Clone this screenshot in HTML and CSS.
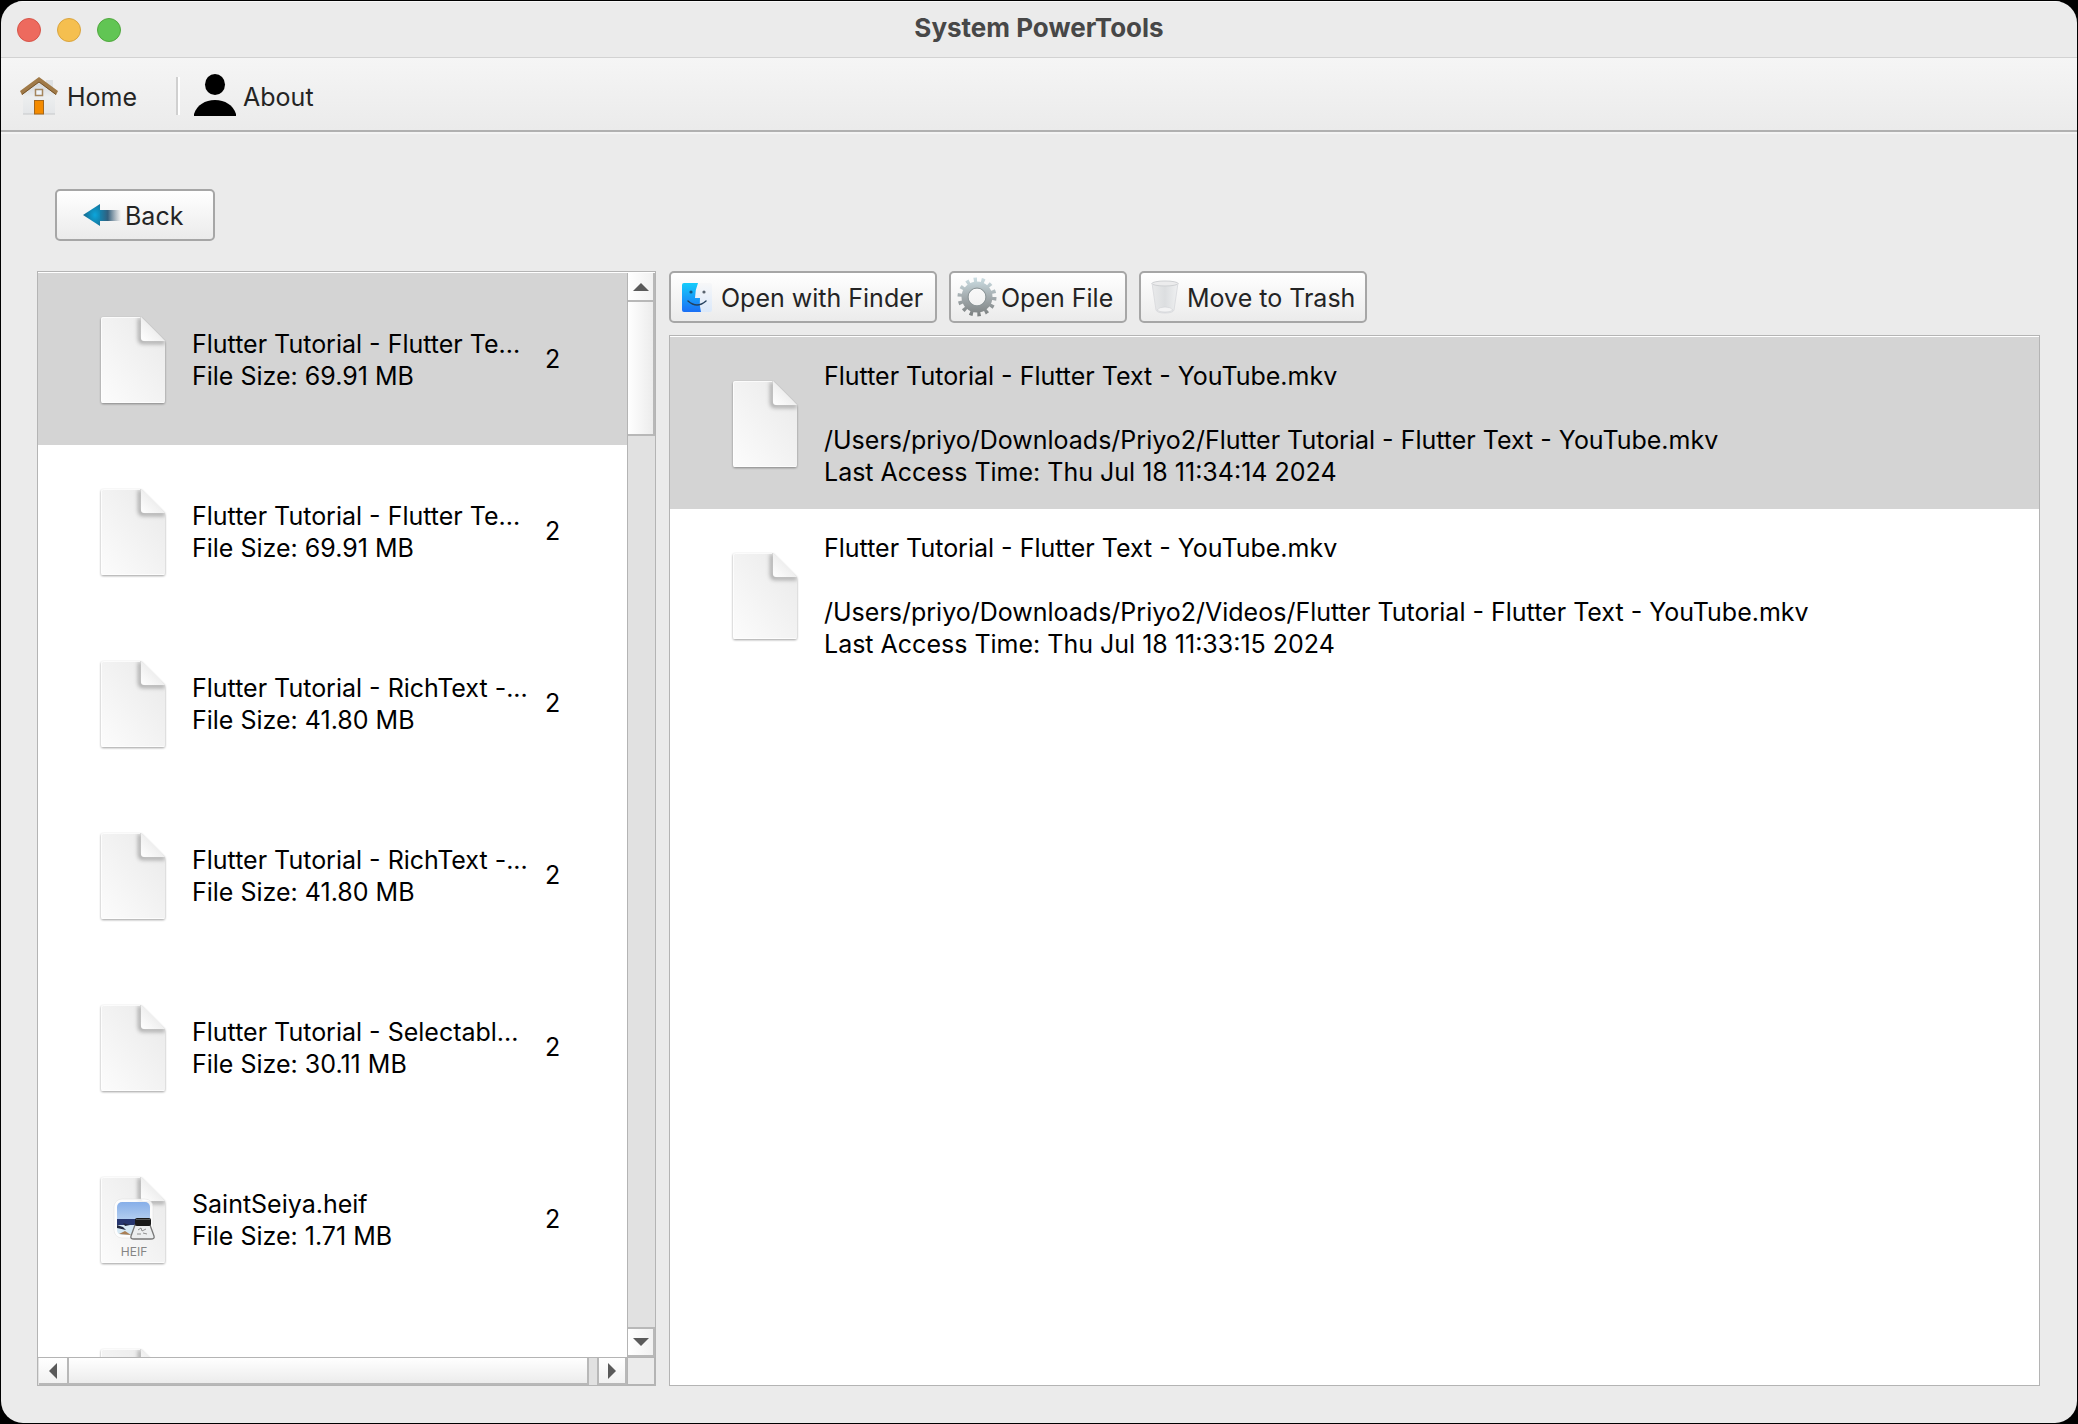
FILE: index.html
```html
<!DOCTYPE html>
<html lang="en">
<head>
<meta charset="utf-8">
<title>System PowerTools</title>
<link rel="stylesheet" href="styles.css">
</head>
<body>
<svg class="defs" aria-hidden="true">
  <defs>
    <linearGradient id="paper" x1="1" y1="0" x2="0" y2="1"><stop offset="0" stop-color="#e9e9e9"/><stop offset="1" stop-color="#fcfcfc"/></linearGradient>
    <linearGradient id="fold" x1="0" y1="1" x2="0.6" y2="0.4"><stop offset="0" stop-color="#ffffff"/><stop offset="1" stop-color="#ececec"/></linearGradient>
    <filter id="soft" x="-50%" y="-50%" width="200%" height="200%"><feGaussianBlur stdDeviation="2"/></filter>
    <filter id="edge" x="-10%" y="-10%" width="120%" height="120%"><feDropShadow dx="0" dy="1" stdDeviation="0.8" flood-color="#000" flood-opacity="0.38"/></filter>
    <clipPath id="sheet"><path d="M2 0H40L64 24V84Q64 86 62 86H2Q0 86 0 84V2Q0 0 2 0Z"/></clipPath>
    <symbol id="file" viewBox="-3 -3 70 94">
      <path d="M2 0H40L64 24V84Q64 86 62 86H2Q0 86 0 84V2Q0 0 2 0Z" fill="url(#paper)" filter="url(#edge)"/>
      <g clip-path="url(#sheet)"><path d="M39 1V22Q39 25 42 25H64" fill="none" stroke="#000" stroke-opacity=".4" stroke-width="3" filter="url(#soft)"/></g>
      <path d="M40 0V21Q40 24 43 24H64Z" fill="url(#fold)"/>
      <path d="M.5 84V2.500Q.5 .5 2.500 .5H39M1 85.500H63" fill="none" stroke="#fff" stroke-opacity=".75"/>
    </symbol>
  </defs>
</svg>
<div class="window">
  <header class="titlebar">
    <div class="lights">
      <button class="light close" aria-label="Close"></button>
      <button class="light minimise" aria-label="Minimise"></button>
      <button class="light zoom" aria-label="Zoom"></button>
    </div>
    <h1 class="title">System PowerTools</h1>
  </header>
  <nav class="toolbar">
    <button class="tool">
      <svg width="40" height="40" viewBox="0 0 40 40" aria-hidden="true">
        <defs><linearGradient id="wall" x1="0" y1="0" x2="0" y2="1"><stop offset="0" stop-color="#cfd3d6"/><stop offset=".5" stop-color="#eceeef"/><stop offset="1" stop-color="#e4e6e8"/></linearGradient></defs>
        <path d="M27 4H34V16L27 10Z" fill="#dfe2e4"/>
        <path d="M4 16L20 4L36 16V38H4Z" fill="url(#wall)"/><path d="M4 38H36" stroke="#c6c8ca"/>
        <path d="M1 15L20 1L39 15L37 19L20 6L3 19Z" fill="#a07a48"/><path d="M3 18.500L20 6L37 18.500" fill="none" stroke="#765327"/>
        <rect x="16.500" y="13.500" width="7" height="6" fill="#eef4fa" stroke="#a4855c" stroke-width="1.500"/>
        <rect x="15.500" y="24.500" width="9" height="13.500" fill="#f48b00" stroke="#a5671b"/>
      </svg>
      <span>Home</span>
    </button>
    <span class="divider"></span>
    <button class="tool about">
      <svg width="42" height="42" viewBox="0 0 42 42" aria-hidden="true"><ellipse cx="21" cy="10.500" rx="10" ry="10.500"/><path d="M0 42V40C3 31 11 26 21 26S39 31 42 40V42Z"/></svg>
      <span>About</span>
    </button>
  </nav>
  <main class="content">
    <div class="back-row">
      <button class="push back">
        <svg width="38" height="24" viewBox="0 0 38 24" aria-hidden="true">
          <defs><linearGradient id="shaft" x1="0" x2="1"><stop offset="0" stop-color="#0b8fbe"/><stop offset=".45" stop-color="#315f7d"/><stop offset="1" stop-color="#607080" stop-opacity="0"/></linearGradient>
          <radialGradient id="head" cx=".7" cy=".5" r=".6"><stop offset="0" stop-color="#0ca6dc"/><stop offset="1" stop-color="#166f94"/></radialGradient></defs>
          <path d="M14 7H38V18H14Z" fill="url(#shaft)"/><path d="M0 12L17 1V23Z" fill="url(#head)"/>
        </svg>
        <span>Back</span>
      </button>
    </div>
    <div class="panes">
      <section class="pane duplicates" aria-label="Duplicate files">
        <ul class="list">
          <li class="row selected"><svg class="icon"><use href="#file"/></svg><div class="text"><p>Flutter Tutorial - Flutter Te...</p><p>File Size: 69.91 MB</p></div><span class="count">2</span></li>
          <li class="row"><svg class="icon"><use href="#file"/></svg><div class="text"><p>Flutter Tutorial - Flutter Te...</p><p>File Size: 69.91 MB</p></div><span class="count">2</span></li>
          <li class="row"><svg class="icon"><use href="#file"/></svg><div class="text"><p>Flutter Tutorial - RichText -...</p><p>File Size: 41.80 MB</p></div><span class="count">2</span></li>
          <li class="row"><svg class="icon"><use href="#file"/></svg><div class="text"><p>Flutter Tutorial - RichText -...</p><p>File Size: 41.80 MB</p></div><span class="count">2</span></li>
          <li class="row"><svg class="icon"><use href="#file"/></svg><div class="text"><p>Flutter Tutorial - Selectabl...</p><p>File Size: 30.11 MB</p></div><span class="count">2</span></li>
          <li class="row">
            <svg class="icon" viewBox="-3 -3 70 94">
              <defs><linearGradient id="sky" x1="0" y1="0" x2="0" y2="1"><stop offset="0" stop-color="#86aee8"/><stop offset="1" stop-color="#b3cef0"/></linearGradient><clipPath id="photo"><rect x="16" y="25" width="33" height="33" rx="5"/></clipPath></defs>
              <use href="#file" x="-3" y="-3" width="70" height="94"/>
              <rect x="13" y="22" width="39" height="39" rx="8" fill="#fff" fill-opacity=".8" stroke="#dedede" stroke-width=".5"/>
              <g clip-path="url(#photo)"><path fill="url(#sky)" d="M16 25H49V43H16Z"/><path fill="#26366f" d="M16 42H49V49H16Z"/><path fill="#d5e8f4" d="M16 48H49V58H16Z"/><path d="M16 48L22 50L25 53L16 51ZM22 46L29 48L24 49Z" fill="#20263c"/><path d="M18 57L24 54L30 58Z" fill="#a97f56"/></g>
              <path d="M34 48H49L53 59Q54 62 50 62H33Q29 62 30 59Z" fill="#eceeef" stroke="#777" stroke-width="1.300"/>
              <path d="M37 53L40 51L41 54L45 52M36 57H40M42 56L46 57" fill="none" stroke="#777" stroke-width=".8"/>
              <rect x="34" y="41" width="16" height="8" rx="2" fill="#191919"/><path d="M35 42.500H49" stroke="#555"/>
              <text class="badge" x="33" y="79" text-anchor="middle">HEIF</text>
            </svg>
            <div class="text"><p>SaintSeiya.heif</p><p>File Size: 1.71 MB</p></div><span class="count">2</span></li>
          <li class="row"><svg class="icon"><use href="#file"/></svg></li>
        </ul>
        <div class="scroll vertical">
          <button class="step" aria-label="Scroll up"><svg width="16" height="8" viewBox="0 0 16 8"><path d="M0 8L8 0L16 8Z"/></svg></button>
          <div class="track"><div class="thumb"></div></div>
          <button class="step" aria-label="Scroll down"><svg width="16" height="8" viewBox="0 0 16 8"><path d="M0 0H16L8 8Z"/></svg></button>
        </div>
        <div class="scroll horizontal">
          <button class="step" aria-label="Scroll left"><svg width="8" height="16" viewBox="0 0 8 16"><path d="M8 0V16L0 8Z"/></svg></button>
          <div class="track"><div class="thumb"></div></div>
          <button class="step" aria-label="Scroll right"><svg width="8" height="16" viewBox="0 0 8 16"><path d="M0 0L8 8L0 16Z"/></svg></button>
        </div>
        <div class="corner"></div>
      </section>
      <section class="details">
        <div class="actions">
          <button class="push finder">
            <svg width="32" height="30" viewBox="0 0 32 30" aria-hidden="true">
              <defs><linearGradient id="face" x1="0" y1="0" x2="0" y2="1"><stop offset="0" stop-color="#15ccfb"/><stop offset="1" stop-color="#1b6ff5"/></linearGradient><linearGradient id="side" x1="0" y1="0" x2="0" y2="1"><stop offset="0" stop-color="#f7f7f8"/><stop offset="1" stop-color="#dbe9fa"/></linearGradient></defs>
              <rect x="1" y="1" width="30" height="29" rx="2" fill="url(#side)"/>
              <path d="M3 1H17Q14 8 14 16H19Q18 23 20 30H3Q1 30 1 28V3Q1 1 3 1Z" fill="url(#face)"/>
              <path d="M7 19Q16 27 25 19" fill="none" stroke="#24415e" stroke-width="1.500" stroke-linecap="round"/><circle cx="10" cy="10" r="1.600" fill="#16547e"/><circle cx="23" cy="10" r="1.600" fill="#59636d"/>
            </svg>
            <span>Open with Finder</span>
          </button>
          <button class="push open">
            <svg width="40" height="40" viewBox="-20 -20 40 40" aria-hidden="true">
              <defs><linearGradient id="metal" gradientUnits="userSpaceOnUse" x1="0" y1="-19" x2="0" y2="19"><stop offset="0" stop-color="#cbdde2"/><stop offset=".5" stop-color="#a3abae"/><stop offset="1" stop-color="#7c8080"/></linearGradient></defs>
              <circle r="12" fill="none" stroke="url(#metal)" stroke-width="7"/>
              <circle r="17" fill="none" stroke="url(#metal)" stroke-width="5" stroke-dasharray="3.300 4.330"/>
              <circle r="9" fill="none" stroke="#8d9698" stroke-width="1"/>
            </svg>
            <span>Open File</span>
          </button>
          <button class="push trash">
            <svg width="28" height="34" viewBox="0 0 28 34" aria-hidden="true">
              <defs><linearGradient id="bin"><stop offset="0" stop-color="#e9eaeb"/><stop offset=".5" stop-color="#dcdee0"/><stop offset="1" stop-color="#eff0f1"/></linearGradient></defs>
              <path d="M1 3L5 30Q6 33 14 33T23 30L27 3Z" fill="url(#bin)" stroke="#dcdde0"/>
              <ellipse cx="14" cy="3.500" rx="13" ry="2.500" fill="#ececed" stroke="#cfd1d3"/>
              <path d="M6 30Q8 27 14 27T22 30Q20 32 14 32T6 30Z" fill="#f3f3f4" stroke="#d0d2d5" stroke-width=".6"/>
            </svg>
            <span>Move to Trash</span>
          </button>
        </div>
        <ul class="pane list copies">
          <li class="row selected"><svg class="icon"><use href="#file"/></svg><div class="text"><p>Flutter Tutorial - Flutter Text - YouTube.mkv</p><p class="path">/Users/priyo/Downloads/Priyo2/Flutter Tutorial - Flutter Text - YouTube.mkv</p><p>Last Access Time: Thu Jul 18 11:34:14 2024</p></div></li>
          <li class="row"><svg class="icon"><use href="#file"/></svg><div class="text"><p>Flutter Tutorial - Flutter Text - YouTube.mkv</p><p class="path">/Users/priyo/Downloads/Priyo2/Videos/Flutter Tutorial - Flutter Text - YouTube.mkv</p><p>Last Access Time: Thu Jul 18 11:33:15 2024</p></div></li>
        </ul>
      </section>
    </div>
  </main>
</div>
</body>
</html>
```
FILE: styles.css
```css
* { box-sizing: border-box; }
body {
  margin: 0;
  background: #000;
  color: #000;
  font: 25px/32px Inter, "Liberation Sans", sans-serif;
}
p, h1, ul { margin: 0; padding: 0; }
button {
  margin: 0;
  padding: 0;
  border: 0;
  background: none;
  color: #242424;
  font: inherit;
}
svg { display: block; flex: none; }
.defs { position: absolute; width: 0; height: 0; }

.window {
  display: flex;
  flex-direction: column;
  height: calc(100vh - 2px);
  margin: 1px;
  overflow: hidden;
  border-radius: 22px;
  background: #ebebeb;
}

/* Title bar */
.titlebar {
  display: grid;
  flex: none;
  grid-template-columns: 1fr auto 1fr;
  align-items: center;
  height: 57px;
  padding: 0 16px;
  border-top: 1px solid #f8f8f8;
  border-bottom: 1px solid #d2d2d2;
}
.lights { display: flex; gap: 16px; }
.light {
  width: 24px;
  height: 24px;
  border: 1px solid #d65549;
  border-radius: 50%;
  background: #ed6a5e;
}
.minimise { border-color: #d9a43f; background: #f5bf4f; }
.zoom { border-color: #51a73e; background: #61c554; }
.title {
  padding-bottom: 4px;
  color: #474747;
  font-size: 26px;
  font-weight: 700;
}

/* Toolbar */
.toolbar {
  display: flex;
  flex: none;
  align-items: center;
  height: 74px;
  padding: 4px 18px 0;
  border-bottom: 2px solid #b0b0b0;
  background: linear-gradient(#f5f5f5, #ebebeb);
}
.tool { display: flex; align-items: center; gap: 8px; }
.tool span, .push span, .text { padding-top: 2px; }
.divider {
  width: 4px;
  height: 38px;
  margin: 0 14px 0 39px;
  border-left: 2px solid #d0d0d0;
  background: #fff;
}
.about { gap: 7px; }
.about svg { margin-bottom: 2px; }

/* Main area */
.content {
  display: flex;
  flex: 1;
  flex-direction: column;
  gap: 30px;
  min-height: 0;
  padding: 55px 37px 37px 36px;
  border-top: 2px solid #f3f3f3;
}
.back-row { display: flex; flex: none; padding-left: 18px; }
.push {
  display: flex;
  align-items: center;
  height: 52px;
  border: 2px solid #a6a6a6;
  border-radius: 5px;
  background: linear-gradient(#fff, #ebebeb);
  white-space: nowrap;
}
.back { gap: 4px; width: 160px; padding-left: 26px; }
.panes {
  display: grid;
  flex: 1;
  grid-template: minmax(0, 1fr) / 619px minmax(0, 1fr);
  gap: 13px;
  min-height: 0;
}
.pane { border: 1px solid #b4b4b4; background: #fff; }

/* File lists */
.list { min-height: 0; overflow: hidden; list-style: none; }
.row {
  display: flex;
  align-items: center;
  height: 172px;
  padding-left: 60px;
  white-space: nowrap;
}
.selected { background: #d4d4d4; }
.icon { width: 70px; height: 94px; margin: 3px 24px 0 0; overflow: visible; }
.text { flex: 1; }
.badge { fill: #858585; font-size: 12px; }
.duplicates {
  display: grid;
  grid-template: minmax(0, 1fr) 28px / minmax(0, 1fr) 28px;
  min-height: 0;
  padding-top: 1px;
}
.count { width: 82px; }

/* Scroll bars */
.scroll { display: flex; min-height: 0; background: #e1e1e1; }
.vertical { flex-direction: column; border-left: 1px solid #b4b4b4; }
.horizontal { border-top: 1px solid #b4b4b4; padding-left: 1px; }
.track { flex: 1; }
.step {
  display: flex;
  flex: none;
  align-items: center;
  justify-content: center;
  border: solid #b8b8b8;
  border-width: 0 2px 2px 0;
  background: linear-gradient(90deg, #fff, #f1f1f1);
}
.step svg { fill: #5a5a5a; }
.vertical .step { height: 29px; }
.vertical .step:last-child { height: 30px; border-top-width: 2px; }
.vertical .thumb {
  height: 134px;
  border: solid #b8b8b8;
  border-width: 0 2px 2px 0;
  background: linear-gradient(90deg, #fff, #ececec);
}
.horizontal .step { width: 30px; background: linear-gradient(#fff, #f1f1f1); }
.horizontal .step:last-child { border-left-width: 2px; }
.horizontal .thumb {
  width: calc(100% - 8px);
  height: 100%;
  border: solid #b8b8b8;
  border-width: 0 2px 2px 0;
  background: linear-gradient(#fff, #ececec);
}
.corner { border: 1px solid #b4b4b4; background: #ebebeb; }

/* Details pane */
.details {
  display: flex;
  flex-direction: column;
  gap: 12px;
  min-width: 0;
  min-height: 0;
}
.actions { display: flex; flex: none; gap: 12px; }
.finder { gap: 8px; width: 268px; padding-left: 10px; }
.open { gap: 4px; width: 178px; padding-left: 6px; }
.trash { gap: 8px; width: 228px; padding-left: 10px; }
.copies { flex: 1; padding-top: 1px; }
.path { padding-top: 32px; }
```
